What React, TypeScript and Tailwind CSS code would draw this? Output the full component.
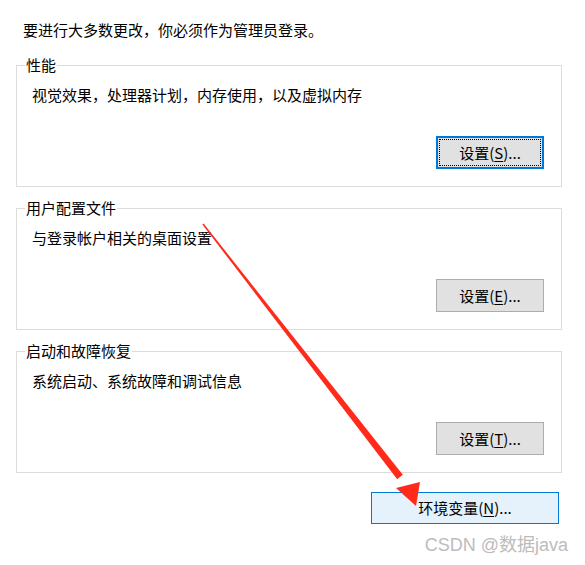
import React from 'react';

const font = { fontFamily: '"Noto Sans CJK SC", "Liberation Sans", sans-serif' };

function Mnemonic({ label, k }: { label: string; k: string }) {
  return (
    <span>
      {label}(<u className="underline-offset-2">{k}</u>)...
    </span>
  );
}

function Group({ title, desc, keyChar, focused }: { title: string; desc: string; keyChar: string; focused?: boolean }) {
  return (
    <fieldset className="w-[546px] border border-[#dcdcdc]">
      <legend className="ml-[8px] px-[1px] leading-[20px]">{title}</legend>
      <div className="h-[111px] flex flex-col pl-[15px] pr-[17px] pt-[10px] pb-[17px]">
        <p className="leading-[20px]">{desc}</p>
        {focused ? (
          <button className="mt-auto self-end h-[33px] w-[108px] border-2 border-[#0078d7] bg-[#e1e1e1] p-[1px]">
            <div className="h-full w-full border border-dotted border-black flex items-center justify-center leading-[20px]">
              <Mnemonic label="设置" k={keyChar} />
            </div>
          </button>
        ) : (
          <button className="mt-auto self-end h-[33px] w-[108px] border border-[#adadad] bg-[#e1e1e1] flex items-center justify-center leading-[20px]">
            <Mnemonic label="设置" k={keyChar} />
          </button>
        )}
      </div>
    </fieldset>
  );
}

export default function App() {
  return (
    <div className="relative w-[585px] h-[565px] bg-white text-black text-[15px] overflow-hidden" style={font}>
      <div className="pl-[16px] pt-[20px]">
        <p className="pl-[7px] leading-[20px]">要进行大多数更改，你必须作为管理员登录。</p>
        <div className="mt-[15px] flex flex-col gap-[11px]">
          <Group title="性能" desc="视觉效果，处理器计划，内存使用，以及虚拟内存" keyChar="S" focused />
          <Group title="用户配置文件" desc="与登录帐户相关的桌面设置" keyChar="E" />
          <Group title="启动和故障恢复" desc="系统启动、系统故障和调试信息" keyChar="T" />
        </div>
        <div className="w-[546px] flex justify-end pr-[3px] mt-[19px]">
          <button className="h-[32px] w-[188px] border border-[#0078d7] bg-[#e5f1fb] flex items-center justify-center leading-[20px]">
            <Mnemonic label="环境变量" k="N" />
          </button>
        </div>
        <div className="flex justify-end pr-[17px] mt-[9px]">
          <span className="text-[18px] leading-[24px] text-[#bcbcbc]" style={{ fontFamily: '"Liberation Sans", "Noto Sans CJK SC", sans-serif' }}>
            CSDN @数据java
          </span>
        </div>
      </div>

      {/* red annotation arrow */}
      <svg className="absolute left-0 top-0 pointer-events-none" width="585" height="565" viewBox="0 0 585 565">
        <polygon points="203.6,223.6 202.4,224.4 397.2,479.2 402.8,474.8" fill="#ff2a1a" />
        <polygon points="396,488 420,482 416,506" fill="#ff2a1a" />
      </svg>
    </div>
  );
}
